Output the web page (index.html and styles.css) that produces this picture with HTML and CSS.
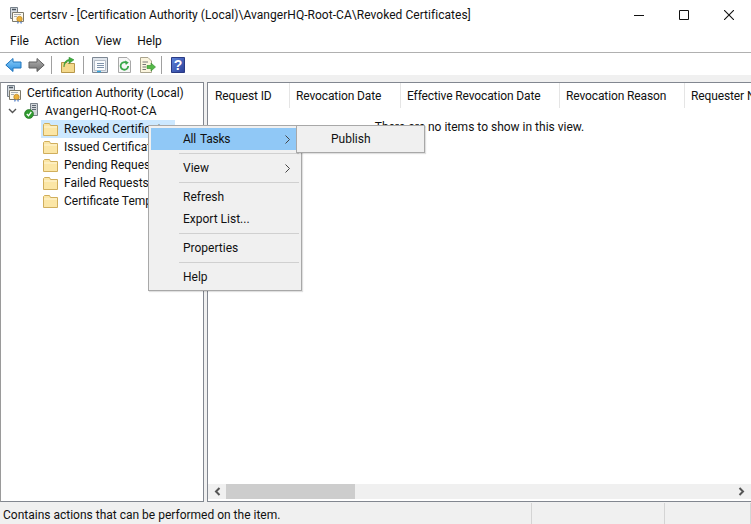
FILE: index.html
```html
<!DOCTYPE html>
<html lang="en">
<head>
  <meta charset="UTF-8">
  <title>certsrv</title>
  <link rel="stylesheet" href="styles.css">
</head>
<body>
  <svg class="defs" width="0" height="0">
    <defs>
      <linearGradient id="blue-arrow" x1="0" y1="0" x2="0" y2="1">
        <stop offset="0" stop-color="#8fd0fa"/>
        <stop offset="1" stop-color="#2b8fe0"/>
      </linearGradient>
      <linearGradient id="gray-arrow" x1="0" y1="0" x2="0" y2="1">
        <stop offset="0" stop-color="#b4b4b4"/>
        <stop offset="1" stop-color="#6e6e6e"/>
      </linearGradient>
      <linearGradient id="help-blue" x1="0" y1="0" x2="1" y2="1">
        <stop offset="0" stop-color="#5f86dc"/>
        <stop offset="1" stop-color="#2c3f98"/>
      </linearGradient>
    </defs>
    <symbol id="folder" viewBox="0 0 16 16">
      <path d="M.5 3.500V14.500H14.500V4.500H7.500L6.500 2.500H1.500Z" fill="#fbe6a6" stroke="#d0ae5c"/>
      <path d="M1 6H14" stroke="#fff6d8"/>
    </symbol>
    <symbol id="certsrv" viewBox="0 0 17 17">
      <path d="M1.500 .5H8.500V11.500H1.500Z" fill="#d6dbe0" stroke="#76808a"/>
      <path d="M3 2.500H7" stroke="#4b5560" stroke-width="1.500"/>
      <path d="M3.500 5.500H14.500V14.500H3.500Z" fill="#fdfaee" stroke="#7d7a6c"/>
      <path d="M5 7.500H12M5 9.500H8" stroke="#a8aeb5"/>
      <circle cx="10.500" cy="12" r="2.700" fill="#ecb23a" stroke="#bd8420" stroke-width=".7"/>
      <path d="M9.200 14.500L8.800 16.500M11.800 14.500L12.200 16.500" stroke="#3d6fc4" stroke-width="1.200"/>
    </symbol>
    <symbol id="server-ok" viewBox="0 0 15 16">
      <path d="M6.500 .5H13.500V12.500H6.500Z" fill="#d2d6da" stroke="#7a828a"/>
      <path d="M8 2.500H12M8 4.500H12M8 6.500H12" stroke="#5d6670"/>
      <circle cx="5" cy="11" r="4.500" fill="#2f9a2f" stroke="#1f6f1f" stroke-width=".6"/>
      <path d="M2.800 11L4.500 12.800L7.300 9" fill="none" stroke="#fff" stroke-width="1.300"/>
    </symbol>
  </svg>

  <div class="titlebar">
    <svg class="title-icon" width="17" height="17"><use href="#certsrv"/></svg>
    <span class="title-text">certsrv - [Certification Authority (Local)\AvangerHQ-Root-CA\Revoked Certificates]</span>
    <div class="win-buttons">
      <svg width="10" height="10" viewBox="0 0 10 10"><path d="M0 5.500H10" stroke="#111"/></svg>
      <svg width="10" height="10" viewBox="0 0 10 10"><path d="M.5 .5H9.500V9.500H.5Z" fill="none" stroke="#111"/></svg>
      <svg width="10" height="10" viewBox="0 0 10 10"><path d="M0 0L10 10M10 0L0 10" stroke="#111" stroke-width="1.100"/></svg>
    </div>
  </div>

  <div class="menubar">
    <span>File</span>
    <span>Action</span>
    <span>View</span>
    <span>Help</span>
  </div>

  <div class="toolbar">
    <svg class="tool tool-back" width="17" height="16" viewBox="0 0 17 16"><path d="M.8 8L8 1.500V5H16V11H8V14.500Z" fill="url(#blue-arrow)" stroke="#1f74bd"/></svg>
    <svg class="tool tool-forward" width="17" height="16" viewBox="0 0 17 16"><path d="M16.200 8L9 1.500V5H1V11H9V14.500Z" fill="url(#gray-arrow)" stroke="#5e5e5e"/></svg>
    <i class="tool-sep sep-a"></i>
    <svg class="tool tool-up" width="16" height="16" viewBox="0 0 16 16"><path d="M1.500 5.500V15.500H14.500V6.500H8L7 5.500Z" fill="#f4d98c" stroke="#b7974a"/><path d="M4 10C4.500 6 7 4.500 9 4V6.500L14 2.800L9 .2V2.500C5.500 3 3.500 6 4 10Z" fill="#3fae3f" stroke="#2a862a" stroke-width=".5"/></svg>
    <i class="tool-sep sep-b"></i>
    <svg class="tool tool-pane" width="16" height="16" viewBox="0 0 16 16"><path d="M.5 .5H15.500V15.500H.5Z" fill="#dfe5ec" stroke="#7d8793"/><path d="M2.500 3.500H13.500V13.500H2.500Z" fill="#fafcfe" stroke="#b4bcc6"/><path d="M5 6.500H12M5 8.500H12M5 10.500H12" stroke="#7f93aa"/><path d="M5 14.500H9" stroke="#35a8e0" stroke-width="1.400"/></svg>
    <svg class="tool tool-refresh" width="15" height="16" viewBox="0 0 15 16"><path d="M1.500 .5H10L13.500 4V15.500H1.500Z" fill="#f7f7f7" stroke="#a8a8a8"/><path d="M11.200 9A3.800 3.800 0 1 1 9.500 5.800" fill="none" stroke="#3aa84a" stroke-width="1.800"/><path d="M8 3.500L11.800 5.500L8.800 8Z" fill="#3aa84a"/></svg>
    <svg class="tool tool-export" width="17" height="16" viewBox="0 0 17 16"><path d="M1.500 .5H9L12.500 4V15.500H1.500Z" fill="#fbf5de" stroke="#aaa48e"/><path d="M3.500 5H9M3.500 7.500H7M3.500 10H7M3.500 12.500H7" stroke="#777"/><path d="M8 8.500H12V6L16.500 10L12 14V11.500H8Z" fill="#54b948" stroke="#348a2c" stroke-width=".6"/></svg>
    <i class="tool-sep sep-c"></i>
    <svg class="tool tool-help" width="14" height="16" viewBox="0 0 14 16"><path d="M.5 .5H13.500V15.500H.5Z" fill="url(#help-blue)" stroke="#2a3a84"/><text class="help-mark" x="7" y="13">?</text></svg>
  </div>

  <div class="panes">
    <div class="tree">
      <div class="tree-row row-root">
        <svg width="17" height="17"><use href="#certsrv"/></svg>
        <span>Certification Authority (Local)</span>
      </div>
      <div class="tree-row row-ca">
        <svg class="twisty" width="9" height="6" viewBox="0 0 9 6"><path d="M1 1L4.500 4.500L8 1" fill="none" stroke="#555" stroke-width="1.400"/></svg>
        <svg width="15" height="16"><use href="#server-ok"/></svg>
        <span>AvangerHQ-Root-CA</span>
      </div>
      <div class="tree-row row-folder selected">
        <svg width="16" height="16"><use href="#folder"/></svg>
        <span>Revoked Certificates</span>
      </div>
      <div class="tree-row row-folder">
        <svg width="16" height="16"><use href="#folder"/></svg>
        <span>Issued Certificates</span>
      </div>
      <div class="tree-row row-folder">
        <svg width="16" height="16"><use href="#folder"/></svg>
        <span>Pending Requests</span>
      </div>
      <div class="tree-row row-folder">
        <svg width="16" height="16"><use href="#folder"/></svg>
        <span>Failed Requests</span>
      </div>
      <div class="tree-row row-folder">
        <svg width="16" height="16"><use href="#folder"/></svg>
        <span>Certificate Templates</span>
      </div>
    </div>

    <div class="list">
      <div class="list-head">
        <div class="col col-id">Request ID</div>
        <div class="col col-date">Revocation Date</div>
        <div class="col col-effective">Effective Revocation Date</div>
        <div class="col col-reason">Revocation Reason</div>
        <div class="col col-requester">Requester Name</div>
      </div>
      <div class="list-body">There are no items to show in this view.</div>
      <div class="hscroll">
        <svg class="arrow arrow-left" width="7" height="9" viewBox="0 0 7 9"><path d="M5.500 1L2 4.500L5.500 8" fill="none" stroke="#555" stroke-width="2"/></svg>
        <div class="thumb"></div>
        <svg class="arrow arrow-right" width="7" height="9" viewBox="0 0 7 9"><path d="M1.500 1L5 4.500L1.500 8" fill="none" stroke="#555" stroke-width="2"/></svg>
      </div>
    </div>
  </div>

  <div class="statusbar">
    <div class="status-main">Contains actions that can be performed on the item.</div>
    <div class="status-mid"></div>
    <div class="status-end"></div>
  </div>

  <div class="menu context-menu">
    <div class="menu-item active"><span>All Tasks</span><svg class="sub-arrow" width="5" height="9" viewBox="0 0 5 9"><path d="M.5 .5L4.500 4.500L.5 8.500" fill="none" stroke="#444"/></svg></div>
    <div class="menu-sep"></div>
    <div class="menu-item">View<svg class="sub-arrow" width="5" height="9" viewBox="0 0 5 9"><path d="M.5 .5L4.500 4.500L.5 8.500" fill="none" stroke="#444"/></svg></div>
    <div class="menu-sep"></div>
    <div class="menu-item">Refresh</div>
    <div class="menu-item">Export List...</div>
    <div class="menu-sep"></div>
    <div class="menu-item">Properties</div>
    <div class="menu-sep"></div>
    <div class="menu-item">Help</div>
  </div>

  <div class="menu sub-menu">
    <div class="menu-item">Publish</div>
  </div>
</body>
</html>
```

FILE: styles.css
```css
html, body {
  margin: 0;
  height: 524px;
  overflow: hidden;
}

body {
  display: flex;
  flex-direction: column;
  position: relative;
  width: 751px;
  background-color: #f0f0f0;
  color: #111;
  font-family: Roboto, "Noto Sans", sans-serif;
  font-size: 12px;
  line-height: 16px;
}

.defs {
  position: absolute;
}

svg {
  display: block;
  flex: none;
}

/* title + menu */
.titlebar {
  display: flex;
  align-items: center;
  height: 30px;
  padding-left: 9px;
  background-color: #fff;
}

.title-text {
  margin-left: 4px;
  letter-spacing: .04px;
  white-space: nowrap;
}

.win-buttons {
  display: flex;
  gap: 35px;
  margin-left: auto;
  margin-right: 17px;
}

.menubar {
  display: flex;
  gap: 16px;
  align-items: center;
  height: 22px;
  padding-left: 10px;
  background-color: #fff;
  border-bottom: 1px solid #b0b0b0;
}

/* toolbar */
.toolbar {
  display: flex;
  align-items: center;
  height: 20px;
  padding-top: 2px;
  padding-left: 5px;
  background-color: #fff;
}

.tool-forward {
  margin-left: 6px;
}

.tool-sep {
  width: 1px;
  height: 18px;
  background-color: #a0a0a0;
}

.sep-a {
  margin-left: 6px;
}

.tool-up {
  margin-left: 8px;
}

.sep-b {
  margin-left: 7px;
}

.tool-pane {
  margin-left: 8px;
}

.tool-refresh {
  margin-left: 9px;
}

.tool-export {
  margin-left: 7px;
}

.sep-c {
  margin-left: 5px;
}

.tool-help {
  margin-left: 9px;
}

.help-mark {
  fill: #fff;
  font-family: "Liberation Sans", sans-serif;
  font-size: 14px;
  font-weight: bold;
  text-anchor: middle;
}

/* panes */
.panes {
  display: flex;
  flex: 1;
  gap: 3px;
  min-height: 0;
  margin-top: 7px;
}

.tree {
  width: 202px;
  padding-top: 1px;
  background-color: #fff;
  border: 1px solid #828790;
  border-left-color: #9a9a9a;
}

.tree-row {
  display: flex;
  align-items: center;
  height: 18px;
  white-space: nowrap;
}

.row-root {
  padding-left: 5px;
}

.row-root span {
  margin-left: 4px;
}

.row-ca {
  padding-left: 7px;
}

.row-ca svg + svg {
  margin-left: 7px;
}

.row-ca span {
  margin-left: 6px;
  letter-spacing: .25px;
}

.row-folder {
  width: 134px;
  margin-left: 40px;
  padding-left: 2px;
  box-sizing: border-box;
}

.row-folder span {
  margin-left: 5px;
}

.selected {
  background-color: #cce8ff;
}

.list {
  display: flex;
  flex: 1;
  flex-direction: column;
  min-width: 0;
  background-color: #fff;
  border: 1px solid #828790;
  border-right: 0;
}

.list-head {
  display: flex;
  flex: none;
  height: 25px;
  overflow: hidden;
}

.col {
  flex: none;
  box-sizing: border-box;
  padding-left: 6px;
  border-right: 1px solid #e5e5e5;
  letter-spacing: -.12px;
  line-height: 26px;
  white-space: nowrap;
}

.col-id {
  width: 82px;
  padding-left: 7px;
}

.col-date {
  width: 111px;
}

.col-effective {
  width: 159px;
}

.col-reason {
  width: 125px;
}

.col-requester {
  width: 100px;
}

.list-body {
  flex: 1;
  padding-top: 11px;
  text-align: center;
}

.hscroll {
  display: flex;
  flex: none;
  align-items: center;
  height: 15px;
  margin-bottom: 2px;
  background-color: #f0f0f0;
}

.arrow-left {
  margin-left: 6px;
}

.thumb {
  width: 129px;
  height: 15px;
  margin-left: 5px;
  background-color: #cdcdcd;
}

.arrow-right {
  margin-left: auto;
  margin-right: 6px;
}

/* status */
.statusbar {
  display: flex;
  flex: none;
  height: 22px;
  line-height: 25px;
}

.status-main {
  width: 528px;
  padding-left: 3px;
  white-space: nowrap;
}

.status-mid {
  width: 132px;
}

.status-end {
  width: 85px;
}

.status-main,
.status-mid,
.status-end {
  margin-top: 1px;
  border-right: 1px solid #d4d4d4;
}

/* popups */
.menu {
  position: absolute;
  box-sizing: border-box;
  padding: 2px;
  background-color: #f0f0f0;
  border: 1px solid #a8a8a8;
  box-shadow: 1px 1px 1px rgba(0, 0, 0, .12);
}

.context-menu {
  left: 148px;
  top: 125px;
  width: 154px;
  height: 166px;
}

.sub-menu {
  left: 296px;
  top: 125px;
  width: 129px;
  height: 28px;
}

.sub-menu .menu-item {
  padding-left: 32px;
}

.menu-item {
  display: flex;
  align-items: center;
  justify-content: space-between;
  box-sizing: border-box;
  height: 22px;
  padding-left: 32px;
  padding-right: 9px;
}

.active {
  width: 145px;
  padding-right: 6px;
  background-color: #90c8f6;
}

.active span {
  letter-spacing: -.25px;
  word-spacing: 1.500px;
}

.menu-sep {
  height: 1px;
  margin: 3px 0 3px 28px;
  background-color: #d0d0d0;
}
```
